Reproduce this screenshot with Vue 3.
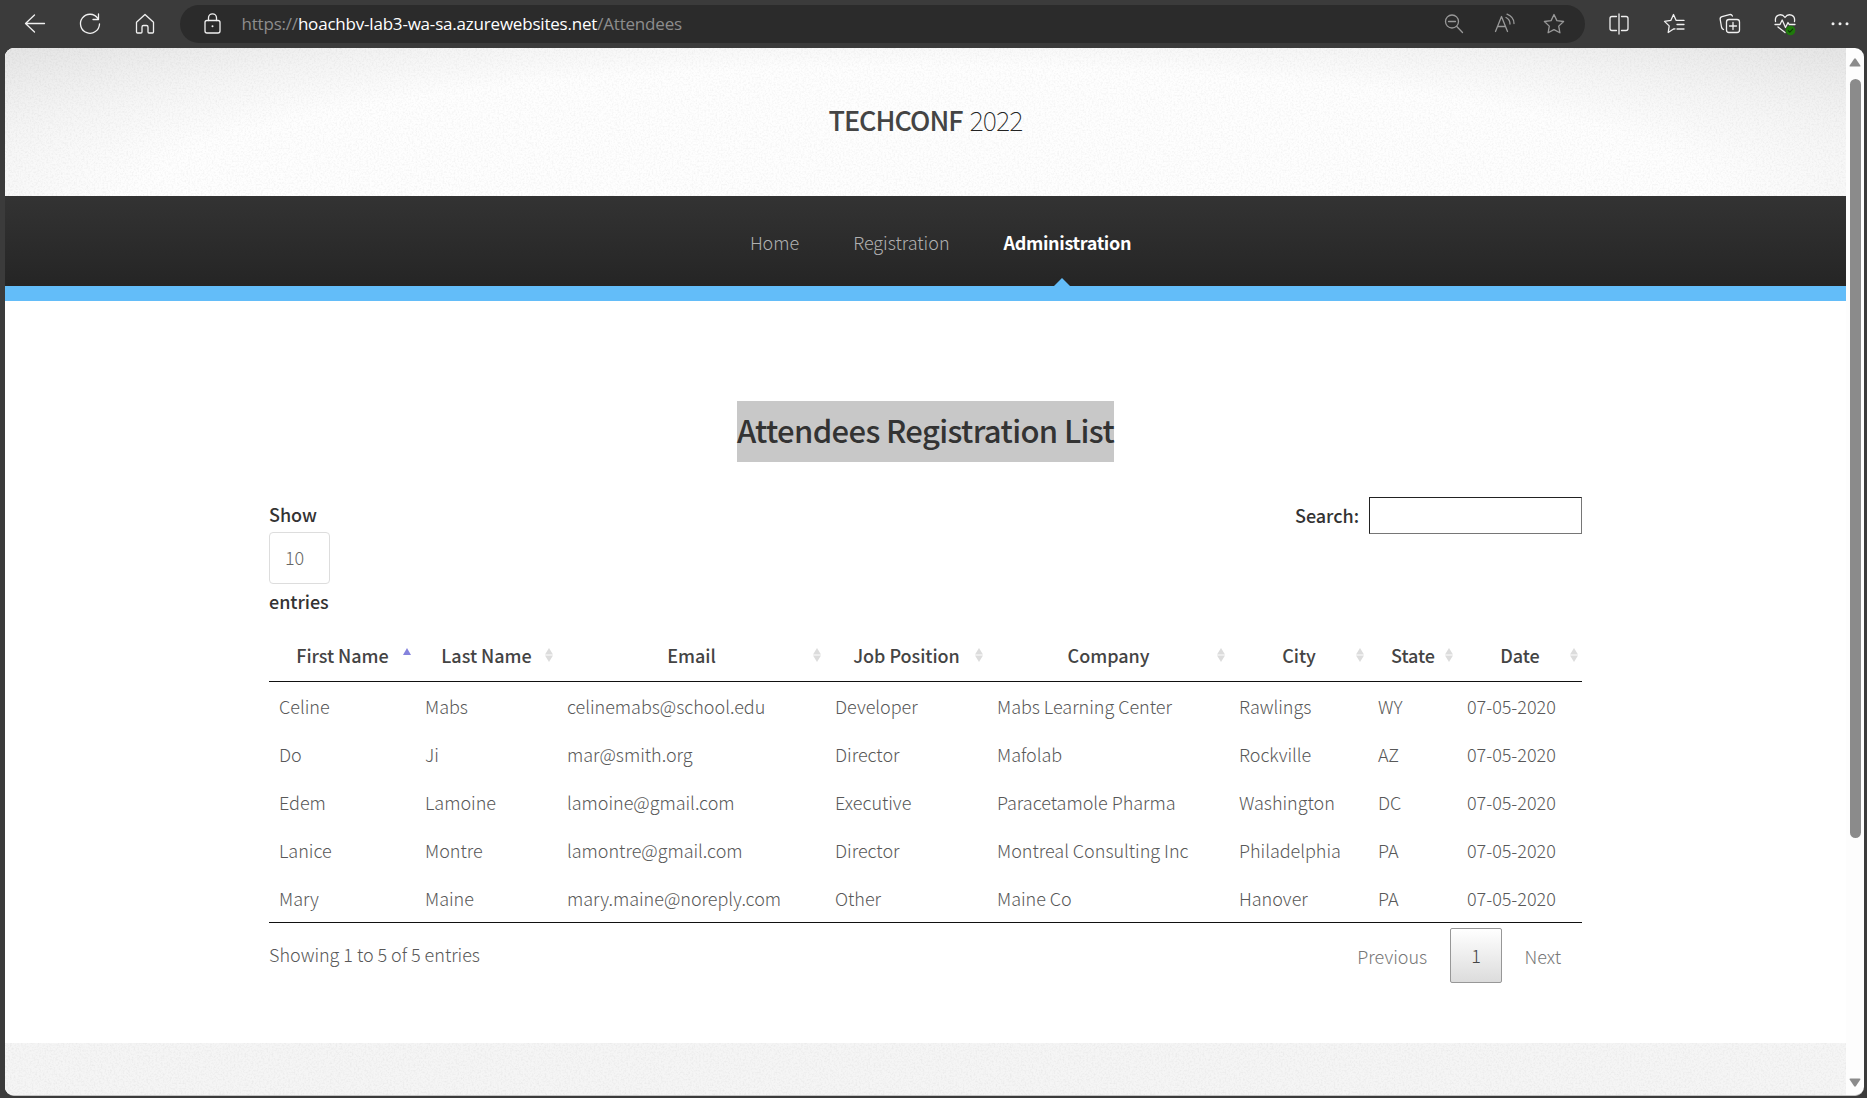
<script setup>
const nav = [
  { label: 'Home' },
  { label: 'Registration' },
  { label: 'Administration', active: true },
]
const columns = [
  { label: 'First Name', width: 146, sorted: true },
  { label: 'Last Name', width: 142 },
  { label: 'Email', width: 268 },
  { label: 'Job Position', width: 162 },
  { label: 'Company', width: 242 },
  { label: 'City', width: 139 },
  { label: 'State', width: 89 },
  { label: 'Date', width: 125 },
]
const attendees = [
  ['Celine', 'Mabs', 'celinemabs@school.edu', 'Developer', 'Mabs Learning Center', 'Rawlings', 'WY', '07-05-2020'],
  ['Do', 'Ji', 'mar@smith.org', 'Director', 'Mafolab', 'Rockville', 'AZ', '07-05-2020'],
  ['Edem', 'Lamoine', 'lamoine@gmail.com', 'Executive', 'Paracetamole Pharma', 'Washington', 'DC', '07-05-2020'],
  ['Lanice', 'Montre', 'lamontre@gmail.com', 'Director', 'Montreal Consulting Inc', 'Philadelphia', 'PA', '07-05-2020'],
  ['Mary', 'Maine', 'mary.maine@noreply.com', 'Other', 'Maine Co', 'Hanover', 'PA', '07-05-2020'],
]
</script>

<template>
  <div class="browser">
    <div class="toolbar">
      <div class="left-tools">
        <svg class="ico" viewBox="0 0 24 24"><path d="M21.500 11.500H2.500M11.500 3l-9 8.500 9 8.500" /></svg>
        <svg class="ico" viewBox="0 0 24 24"><path d="M19.800 6.300A9.500 9.500 0 1 0 21.500 12M20.500 2v5.500H15" /></svg>
        <svg class="ico" viewBox="0 0 24 24"><path d="M3.500 10.300 12 2.500l8.500 7.800V20q0 1-1 1H16q-1 0-1-1v-5q0-1.500-1.500-1.500h-3Q9 13.500 9 15v5q0 1-1 1H4.500q-1 0-1-1z" /></svg>
      </div>
      <div class="address">
        <svg class="ico lock" viewBox="0 0 24 24"><rect x="5" y="8.500" width="15" height="12.500" rx="2" /><path d="M8.500 8.500V5.800a4 4 0 0 1 8 0v2.700" /><circle cx="12.500" cy="14.300" r="1" fill="currentColor" stroke="none" /></svg>
        <div class="url"><span>https://</span><b>hoachbv-lab3-wa-sa.azurewebsites.net</b><span>/Attendees</span></div>
        <div class="address-tools">
          <svg class="ico" viewBox="0 0 24 24"><circle cx="10" cy="9.500" r="6.500" /><path d="M14.800 14.500 20.500 20.500M6.500 9.500h7" /></svg>
          <svg class="ico" viewBox="0 0 24 24"><path d="M3.500 19.500 9.500 4.500 15.500 19.500M5.500 14.500h8M14 5.500q4 2 4 6.500M15 2.200q7 2.800 7 9.300" /></svg>
          <svg class="ico" viewBox="0 0 24 24"><path d="m12 2.500 2.900 6.100 6.700.9-4.900 4.600 1.200 6.700-5.900-3.200-5.900 3.200 1.200-6.700L2.400 9.500l6.700-.9z" /></svg>
        </div>
      </div>
      <div class="right-tools">
        <svg class="ico" viewBox="0 0 24 24"><path d="M9.500 4.500H5Q3 4.500 3 6.500v10q0 2 2 2h4.500M14.500 4.500H19q2 0 2 2v10q0 2-2 2h-4.500M12 2v20" /></svg>
        <svg class="ico" viewBox="0 0 24 24"><path d="M13 16.800 11.500 17l-5.300 3.500 1-6.600-4.700-4.500 6.300-1L11.500 2.500l2.700 5.900H22M15 12.500h7M15 17h7" /></svg>
        <svg class="ico" viewBox="0 0 24 24"><rect x="8.500" y="7.500" width="13" height="13" rx="2.500" /><path d="M15 10.500v7M11.500 14h7M5.500 17.500q-1.500-.5-2-2.500L2.200 7.500q-.4-2.200 1.800-2.800l7.500-2.100q2-.6 2.900 1.500" /></svg>
        <svg class="ico" viewBox="0 0 24 24"><path d="M2.500 9.500C1.500 3 8.500.500 12 5.500 15.500.500 22.500 3 21.500 9.500M2 12.500h5l2.200-4.500 3.300 7.500 2.500-5 1.200 2H22M5 15l7 5.500" /><circle cx="17.500" cy="18.500" r="4.800" class="badge" /><path d="m15.300 18.600 1.500 1.500 2.900-3" class="badge-tick" /></svg>
        <svg class="ico" viewBox="0 0 24 24"><g fill="currentColor" stroke="none"><circle cx="5" cy="11.800" r="1.500" /><circle cx="12" cy="11.800" r="1.500" /><circle cx="19" cy="11.800" r="1.500" /></g></svg>
      </div>
    </div>

    <div class="viewport">
      <div class="page">
        <header class="banner">
          <svg class="grain"><filter id="grain"><feTurbulence type="fractalNoise" baseFrequency="0.55" numOctaves="2" seed="4" /><feColorMatrix values="0 0 0 0 0  0 0 0 0 0  0 0 0 0 0  0.35 0 0 0 -0.14" /></filter><rect width="100%" height="100%" filter="url(#grain)" /></svg>
          <h1><strong>TECHCONF</strong><span>2022</span></h1>
        </header>
        <nav class="nav">
          <a v-for="item in nav" :key="item.label" :class="{ active: item.active }">{{ item.label }}</a>
        </nav>
        <div class="stripe"></div>
        <main>
          <h2><span>Attendees Registration List</span></h2>
          <div class="controls">
            <div class="length">
              <label>Show</label>
              <div class="select">10</div>
              <label>entries</label>
            </div>
            <div class="search"><label>Search:</label><input type="text" /></div>
          </div>
          <table>
            <colgroup><col v-for="c in columns" :key="c.label" :style="{ width: c.width + 'px' }" /></colgroup>
            <thead>
              <tr>
                <th v-for="c in columns" :key="c.label">
                  {{ c.label }}
                  <svg class="sort" viewBox="0 0 8 14"><path v-if="c.sorted" d="M0 7 4 0l4 7z" fill="#8583dd" /><path v-else d="M0 6.500 4 0l4 6.500zM0 7.500 4 14l4-6.500z" fill="#dcdcdc" /></svg>
                </th>
              </tr>
            </thead>
            <tbody>
              <tr v-for="row in attendees" :key="row[2]"><td v-for="(cell, i) in row" :key="i">{{ cell }}</td></tr>
            </tbody>
          </table>
          <div class="summary">
            <div class="info">Showing 1 to 5 of 5 entries</div>
            <div class="pager"><a>Previous</a><a class="current">1</a><a>Next</a></div>
          </div>
        </main>
        <footer><svg class="grain"><rect width="100%" height="100%" filter="url(#grain)" /></svg></footer>
      </div>
      <div class="scrollbar">
        <svg class="arrow" viewBox="0 0 12 9"><path d="M1.500 8.500Q0 8.500.8 7.200L5 1q1-1.300 2 0l4.200 6.200q.8 1.300-.7 1.300z" /></svg>
        <div class="thumb"></div>
        <svg class="arrow down" viewBox="0 0 12 9"><path d="M1.500.5Q0 .5.800 1.800L5 8q1 1.300 2 0l4.200-6.200Q12 .5 10.500.5z" /></svg>
      </div>
    </div>
  </div>
</template>

<style>
body { margin: 0; overflow: hidden; }
</style>

<style scoped>
* { box-sizing: border-box; }
.browser { width: 1867px; height: 1098px; background: #3b3b3b; display: flex; flex-direction: column; font: 300 18px/30px "Noto Sans CJK SC", "Noto Sans", sans-serif; letter-spacing: -.03px; color: #585858; }
.toolbar { height: 48px; flex: none; display: flex; align-items: center; color: #f0f0f0; }
.ico { width: 24px; height: 24px; fill: none; stroke: currentColor; stroke-width: 1.3; stroke-linejoin: round; stroke-linecap: round; flex: none; display: block; }
.left-tools { width: 180px; display: flex; gap: 31px; padding-left: 23px; flex: none; }
.address { width: 1405px; height: 38px; border-radius: 19px; background: #2b2b2b; display: flex; align-items: center; padding: 0 19px 0 20px; flex: none; }
.url { flex: 1; margin-left: 17.500px; font: 400 17px/24px "Open Sans", sans-serif; letter-spacing: -.2px; color: #8d8d8d; }
.url b { font-weight: 400; color: #fff; }
.address-tools { display: flex; gap: 26px; color: #999; }
.right-tools { display: flex; gap: 31.300px; padding-left: 22px; }
.badge { fill: #1f7a0b; stroke: none; }
.badge-tick { stroke: #0c3a05; stroke-width: 1.200; }

.viewport { margin: 0 3px 2px 5px; height: 1048px; border-radius: 9px; overflow: hidden; display: flex; background: #fdfdfd; border-bottom: 1px solid #c4c4c4; }
.page { width: 1841px; flex: none; display: flex; flex-direction: column; background: #fff; }
.banner { height: 148px; flex: none; position: relative; display: flex; justify-content: center; background: radial-gradient(ellipse 56% 115% at 50% 100%, #fefefe 0 76%, #f4f4f4 98%, #e6e6e6 122%); }
.grain { position: absolute; left: 0; top: 0; width: 100%; height: 100%; opacity: .27; }
h1 { margin: 52px 0 0; font-size: 27px; line-height: 40px; height: 40px; color: #444; font-weight: 100; display: flex; gap: 7px; letter-spacing: -1px; position: relative; }
h1 strong { font-weight: 500; }
h1 span { color: #222; letter-spacing: -.8px; }
.nav { height: 90px; flex: none; background: linear-gradient(#333, #252525); display: flex; justify-content: center; align-items: center; gap: 54px; padding-left: 30px; color: #b0b0b0; }
.nav a { position: relative; height: 90px; line-height: 93px; }
.nav .active { color: #fff; font-weight: 700; letter-spacing: -.35px; }
.nav .active::after { content: ""; position: absolute; bottom: 0; left: 50%; margin-left: -13px; border: 8.500px solid transparent; border-top: 0; border-bottom-color: #63bdf9; }
.stripe { height: 15px; flex: none; background: #63bdf9; }
main { height: 742px; flex: none; width: 1313px; margin-left: 264px; padding-top: 100px; }
h2 { margin: 0; text-align: center; height: 61px; font-size: 31px; line-height: 57px; font-weight: 500; letter-spacing: -.64px; color: #333; }
h2 span { display: inline-block; background: #c8c8c8; height: 61px; }
.controls { display: flex; justify-content: space-between; height: 169px; padding-top: 35px; color: #333; font-weight: 500; }
.length { padding-top: 3px; width: 61px; }
.length label { display: block; height: 32px; line-height: 29px; }
.length label:last-child { line-height: 30px; }
.select { height: 52px; border: 1px solid #ddd; border-radius: 4px; padding-left: 15px; line-height: 48px; font-weight: 300; color: #666; margin-bottom: 2px; }
.search { display: flex; gap: 10px; line-height: 37px; height: 37px; }
input { width: 213px; height: 37px; border: 1px solid; border-color: #222 #767676 #767676 #222; background: #fff; padding: 0; }
table { width: 1313px; table-layout: fixed; border-collapse: separate; border-spacing: 0; border-bottom: 1px solid #111; }
th { height: 51px; padding: 0 0 2px 1px; position: relative; border-bottom: 1px solid #111; color: #444; font-weight: 500; white-space: nowrap; text-align: center; }
.sort { position: absolute; right: 4.500px; top: 17px; width: 8px; height: 14px; }
td { height: 48px; padding: 0 0 0 10px; white-space: nowrap; }
.summary { display: flex; justify-content: space-between; padding-top: 5px; }
.info { line-height: 53px; }
.pager { display: flex; align-items: center; height: 55px; line-height: 54px; padding-right: 21px; color: #777; }
.current { width: 52px; height: 55px; margin: 0 22.500px 0 23px; border: 1px solid #979797; border-radius: 2px; background: linear-gradient(#fff, #dcdcdc); text-align: center; color: #444; line-height: 52px; }
footer { flex: 1; background: #f5f5f5; position: relative; }
.scrollbar { width: 18px; display: flex; flex-direction: column; align-items: center; padding: 10px 0 8px; }
.arrow { width: 12px; height: 9px; fill: #8b8b8b; flex: none; }
.thumb { width: 11px; height: 759px; margin-top: 12px; border-radius: 6px; background: #8b8b8b; flex: none; }
.down { margin-top: auto; }
</style>
